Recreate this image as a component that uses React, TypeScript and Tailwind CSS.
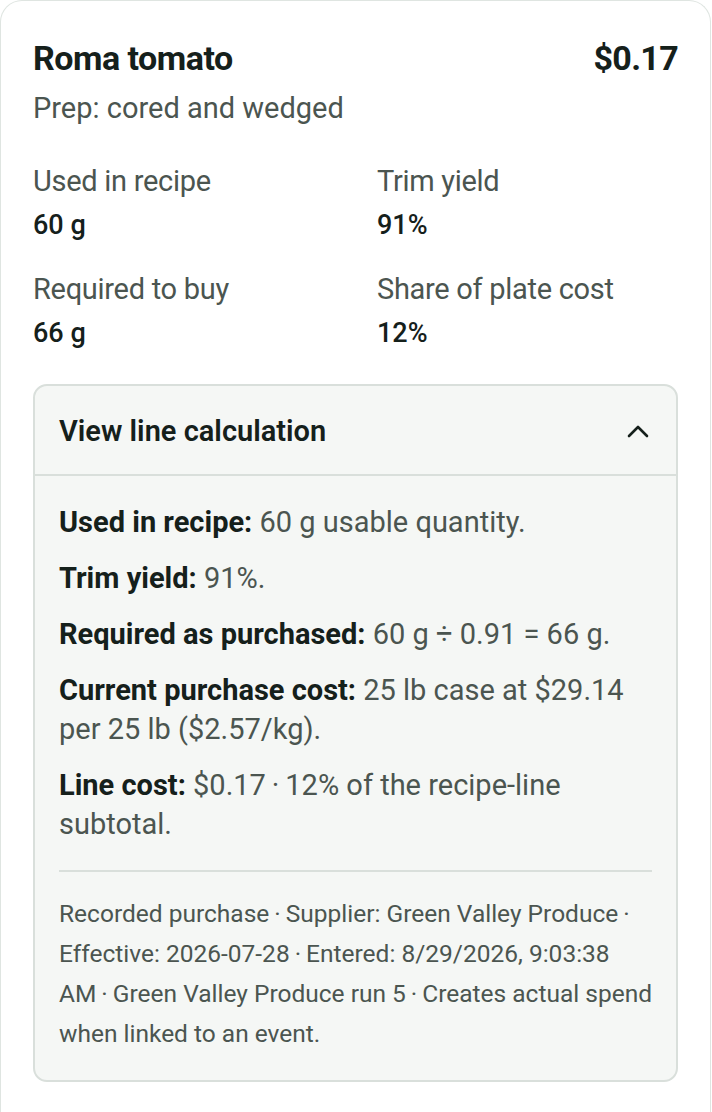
const font = { fontFamily: 'Roboto, "Noto Sans", sans-serif' }

const stats = [
  { label: 'Used in recipe', value: '60 g' },
  { label: 'Trim yield', value: '91%' },
  { label: 'Required to buy', value: '66 g' },
  { label: 'Share of plate cost', value: '12%' },
]

const dot = '\u2009·\u2009'

const lines = [
  { k: 'Used in recipe:', v: '60 g usable quantity.' },
  { k: 'Trim yield:', v: '91%.' },
  { k: 'Required as purchased:', v: '60 g ÷ 0.91 = 66 g.' },
  { k: 'Current purchase cost:', v: '25 lb case at $29.14 per 25 lb ($2.57/kg).' },
  { k: 'Line cost:', v: `$0.17${dot}12% of the recipe-line subtotal.` },
]

const footer = [
  'Recorded purchase',
  'Supplier: Green Valley Produce',
  'Effective: 2026-07-28',
  'Entered: 8/29/2026, 9:03:38 AM',
  'Green Valley Produce run 5',
  'Creates actual spend when linked to an event.',
].join(dot)

export default function App() {
  return (
    <div className="min-h-screen bg-white" style={font}>
      <div className="w-[711px] rounded-t-[22px] border border-b-0 border-[#dfe5e1] bg-white px-8 pt-[37px] pb-10">
        <div className="flex items-start justify-between">
          <h1 className="text-[34px] font-bold leading-[40px] tracking-[-0.015em] text-[#15201b]">Roma tomato</h1>
          <span className="text-[34px] font-bold leading-[40px] tracking-[-0.02em] text-[#15201b]">$0.17</span>
        </div>
        <p className="mt-[12px] text-[29px] leading-[36px] text-[#4b5550]">Prep: cored and wedged</p>

        <div className="mt-[37px] grid grid-cols-2 gap-x-[43px] gap-y-[30px]">
          {stats.map((s) => (
            <div key={s.label}>
              <div className="text-[29px] leading-[36px] tracking-[-0.01em] text-[#4b5550]">{s.label}</div>
              <div className="mt-[10px] text-[27px] font-medium leading-[32px] text-[#15201b]">{s.value}</div>
            </div>
          ))}
        </div>

        <div className="mt-[35px] overflow-hidden rounded-[14px] border-2 border-[#d9dfdb] bg-[#f5f7f5]">
          <div className="flex h-[90px] items-center justify-between border-b-2 border-[#d9dfdb] pl-[24px] pr-[27px]">
            <span className="mt-[4px] text-[29px] font-semibold text-[#15201b]">View line calculation</span>
            <svg width="22" height="14" viewBox="0 0 22 14" fill="none" className="mt-[2px] text-[#15201b]">
              <path d="M2 12 L11 3 L20 12" stroke="currentColor" strokeWidth="2.6" strokeLinecap="round" strokeLinejoin="round" />
            </svg>
          </div>
          <div className="pl-[24px] pr-[22px] pt-[27px] pb-[26px]">
            <div className="flex flex-col gap-[17px]">
              {lines.map((l) => (
                <p key={l.k} className="text-[29px] leading-[39px] text-[#4b5550]">
                  <span className="font-bold text-[#15201b]">{l.k}</span> {l.v}
                </p>
              ))}
            </div>
            <div className="mt-[26px] mr-[2px] border-t-2 border-[#d9dfdb] pt-[22px]">
              <p className="mr-[-2px] text-[24.5px] leading-[40px] text-[#4b5550]">{footer}</p>
            </div>
          </div>
        </div>
      </div>
    </div>
  )
}
